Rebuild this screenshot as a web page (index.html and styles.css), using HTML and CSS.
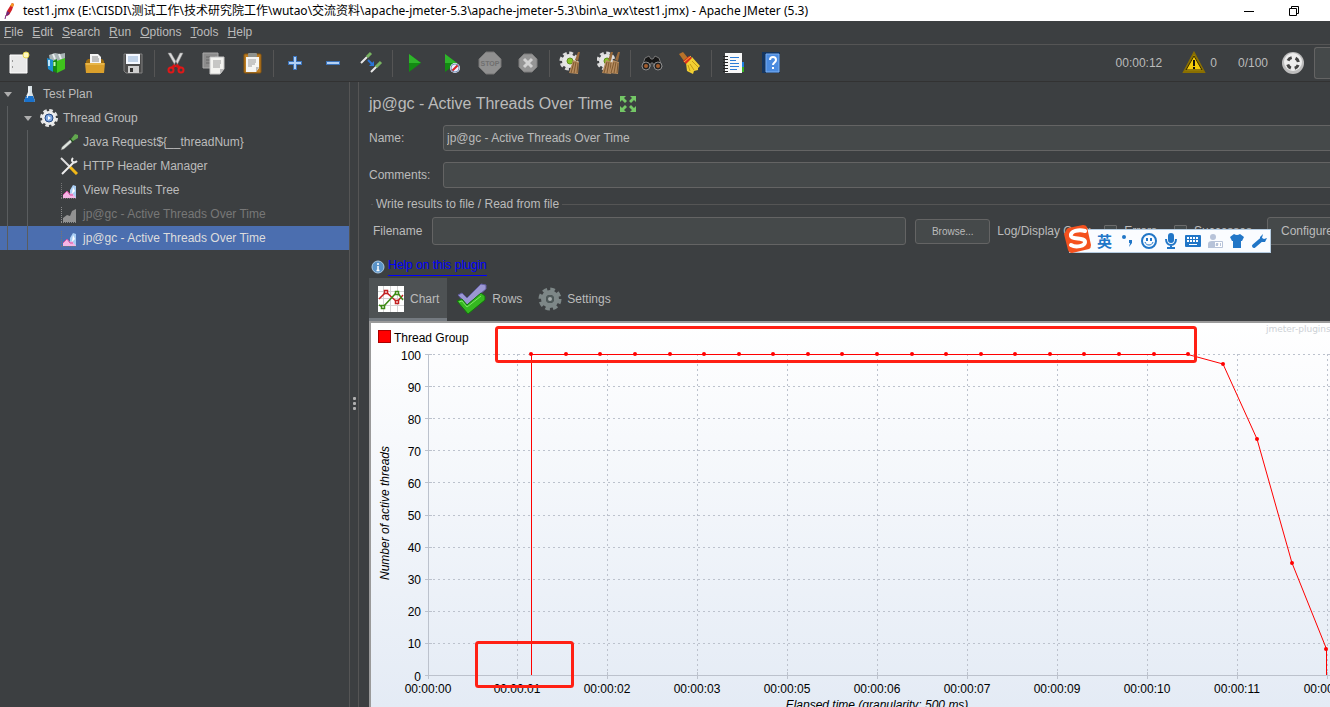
FILE: index.html
```
<!DOCTYPE html>
<html lang="en">
<head>
    <meta charset="UTF-8">
    <meta name="viewport" content="width=device-width, initial-scale=1.0">
    <title>test1.jmx - Apache JMeter (5.3)</title>
    <link rel="stylesheet" href="styles.css">
</head>
<body>
    <header class="titlebar">
        <svg class="feather" width="16" height="18" viewBox="0 0 16 18"><path d="M12 1l2 1-2 6-3 5-3 1 1-5z" fill="#d22128"/><path d="M12 1l2 1-1 3-3-1z" fill="#f69923"/><path d="M7 9l3 2-3 3-1-1z" fill="#6d2a7f"/><path d="M6 13l-1 4" stroke="#7c297d"/></svg>
        <span class="window-title">test1.jmx (E:\CISDI\测试工作\技术研究院工作\wutao\交流资料\apache-jmeter-5.3\apache-jmeter-5.3\bin\a_wx\test1.jmx) - Apache JMeter (5.3)</span>
        <button class="window-btn" aria-label="Minimize"><svg width="12" height="12"><path d="M1 6.500h10" stroke="#000"/></svg></button>
        <button class="window-btn" aria-label="Restore"><svg width="12" height="12" fill="none" stroke="#000"><path d="M1.500 3.500h7v7h-7zM3.500 3.500v-2h7v7h-2"/></svg></button>
    </header>

    <nav class="menubar">
        <button><u>F</u>ile</button>
        <button><u>E</u>dit</button>
        <button><u>S</u>earch</button>
        <button><u>R</u>un</button>
        <button><u>O</u>ptions</button>
        <button><u>T</u>ools</button>
        <button><u>H</u>elp</button>
    </nav>

    <div class="toolbar">
        <button aria-label="New"><svg width="24" height="24"><path d="M3 4h17v18H3z" fill="#e9e9e9" stroke="#fff"/><path d="M5.500 9v2M5.500 15v2" stroke="#999"/><circle cx="19" cy="4" r="3" fill="#fff8c0" stroke="#e8d850"/></svg></button>
        <button aria-label="Templates"><svg width="24" height="24"><path d="M4 4l6-2 5 1 5-1v8H5z" fill="#a9b4b6"/><path d="M8 3l2 5M14 3l2 5" stroke="#e8eeee" stroke-width="2"/><path d="M2 7l6 2v12l-5-3z" fill="#1d8fd1"/><path d="M4 9v6" stroke="#bfe8ff" stroke-width="2"/><path d="M8 10l4-2v14l-4-2z" fill="#168a12"/><path d="M12 10l8-3v11l-8 4z" fill="#3fc41c"/><path d="M9.500 11v4" stroke="#c6ffb4" stroke-width="2"/></svg></button>
        <button aria-label="Open"><svg width="24" height="24"><path d="M3 10l2-2h14l2 2v12H3z" fill="#9c6b10"/><path d="M7 3h8l3 3v9H7z" fill="#f5f5f5"/><path d="M9 6h6M9 8h7M9 10h7" stroke="#888"/><path d="M2 12h20l-1 10H3z" fill="#dba02b"/><path d="M3 13h18" stroke="#f4cb67"/></svg></button>
        <button aria-label="Save"><svg width="24" height="24"><path d="M3 3h18v19H5l-2-2z" fill="#4c4c4c" stroke="#808080"/><path d="M5 3h14v10H5z" fill="#f4f8ff"/><path d="M7 6h10M7 8h10M7 10h10" stroke="#8cacd0"/><path d="M7 15h11v7H7z" fill="#cfcfcf"/><path d="M9 17h3v4H9z" fill="#333"/></svg></button>
        <span class="separator"></span>
        <button aria-label="Cut"><svg width="24" height="24"><path d="M4 2l3 0 7 12-2 2zM19 2l-3 0-6 12 2 2z" fill="#dadada" stroke="#888" stroke-width=".5"/><path d="M11 14l-3 3M12 14l4 3" stroke="#d41414" stroke-width="3"/><circle cx="7" cy="19" r="2.500" fill="none" stroke="#e01818" stroke-width="2"/><circle cx="17" cy="19" r="2.500" fill="none" stroke="#e01818" stroke-width="2"/></svg></button>
        <button aria-label="Copy"><svg width="24" height="24"><path d="M1 2h15v15H1z" fill="#8c8c8c" stroke="#aaa"/><path d="M4 6h9M4 9h7M4 12h5" stroke="#666"/><path d="M8 6h14v12l-4 5H8z" fill="#f3f3f0" stroke="#c5c5c5"/><path d="M11 10h8M11 12h8M11 14h7M11 16h7" stroke="#999"/><path d="M18 23v-5h4z" fill="#bbb"/></svg></button>
        <button aria-label="Paste"><svg width="24" height="24"><rect x="4" y="3" width="17" height="19" rx="1" fill="#bb7c22" stroke="#89560f"/><path d="M6 6h13v11l-3 4H6z" fill="#f5f5f3"/><rect x="8" y="2" width="9" height="4" rx="1" fill="#8e918c"/><path d="M8 9h8M8 11h8M8 13h7M8 15h4" stroke="#999"/><path d="M16 21v-5h3z" fill="#bbb"/></svg></button>
        <span class="separator"></span>
        <button aria-label="Expand all"><svg width="24" height="24"><path d="M12 5v14M5 12h14" stroke="#3b73ba" stroke-width="4"/><path d="M12 6v12M6 12h12" stroke="#b3d1f5" stroke-width="2"/></svg></button>
        <button aria-label="Collapse all"><svg width="24" height="24"><path d="M5 12h14" stroke="#3b73ba" stroke-width="4"/><path d="M6 12h12" stroke="#b3d1f5" stroke-width="2"/></svg></button>
        <button aria-label="Toggle"><svg width="24" height="24"><path d="M2 12l6-6M12 21l6-6" stroke="#e8e8e8" stroke-width="2"/><path d="M8 6l4-4M17 16l5-5" stroke="#79b462" stroke-width="3"/><path d="M9 9l4 4" stroke="#2a75d8" stroke-width="2"/><path d="M15 10v5h-5z" fill="#2a75d8"/></svg></button>
        <span class="separator"></span>
        <button aria-label="Start"><svg width="24" height="24"><path d="M7 3l12 9-12 9z" fill="#138a13"/><path d="M7 3l12 9H7z" fill="#2fb52b"/></svg></button>
        <button aria-label="Start no pauses"><svg width="24" height="24"><path d="M5 3l12 9-12 9z" fill="#138a13"/><path d="M5 3l12 9H5z" fill="#2fb52b"/><circle cx="15" cy="17" r="5" fill="#eef"/><path d="M12 20l6-6" stroke="#d62020" stroke-width="2"/><circle cx="15" cy="17" r="4" fill="none" stroke="#7595ba"/></svg></button>
        <button aria-label="Stop"><svg width="24" height="24"><path d="M8 1h8l7 7v8l-7 7H8l-7-7V8z" fill="#909090" stroke="#777"/><text x="12" y="15" class="stop-text">STOP</text></svg></button>
        <button aria-label="Shutdown"><svg width="24" height="24"><path d="M8 3h8l5 5v8l-5 5H8l-5-5V8z" fill="#959595" stroke="#7d7d7d"/><path d="M8 8l8 8M16 8l-8 8" stroke="#d2d2d2" stroke-width="3"/></svg></button>
        <span class="separator"></span>
        <button aria-label="Clear"><svg width="24" height="24"><use href="#gear" x="0" y="0"/><use href="#broom" x="0" y="0"/></svg></button>
        <button aria-label="Clear all"><svg width="24" height="24"><use href="#gear" x="-1" y="0"/><use href="#broom" x="-5" y="0"/><use href="#broom" x="2" y="0"/></svg></button>
        <span class="separator"></span>
        <button aria-label="Search"><svg width="24" height="24"><path d="M5 7l4-2 2 3h2l2-3 4 2 3 9h-8l-1-4h-2l-1 4H2z" fill="#171717" stroke="#777"/><circle cx="6" cy="15" r="4" fill="#222" stroke="#8d8d8d"/><circle cx="18" cy="15" r="4" fill="#222" stroke="#8d8d8d"/><circle cx="6" cy="15" r="2" fill="#a35d2d"/><circle cx="18" cy="15" r="2" fill="#a35d2d"/></svg></button>
        <button aria-label="Reset search"><svg width="24" height="24"><path d="M1 3l4-2 5 6-4 3z" fill="#b8722a"/><path d="M8 12l6-6 8 9-2 2v2l-4 1-1 3-6-3z" fill="#f1cf32"/><path d="M5 10l6-5 3 2-6 6z" fill="#db2e1c"/><path d="M6 11l7-6" stroke="#f2b632"/><path d="M12 13l4 6M14 10l6 6M10 14l2 6" stroke="#c39a14"/></svg></button>
        <span class="separator"></span>
        <button aria-label="Functions"><svg width="24" height="24"><path d="M19 11h4v5h-4z" fill="#1c7ee0"/><path d="M19 16h4v5h-4z" fill="#35ad24"/><path d="M4 2h17v20H4z" fill="#f8f8f8"/><path d="M2 5.500h5M2 8.500h5M2 11.500h5M2 14.500h5M2 17.500h5M2 20.500h5" stroke="#222"/><path d="M9 6.500h9M9 9.500h6M9 12.500h9M9 15.500h9M9 18.500h7" stroke="#2c7cd6"/></svg></button>
        <button aria-label="Help"><svg width="24" height="24"><path d="M3 1h18v21H3z" fill="#15355e"/><path d="M7 3h13v18H7z" fill="#4a8be0" stroke="#7db0f2"/><path d="M11 9c0-4 6-4 6 0 0 2.500-3 2.500-3 5M14 16v2" fill="none" stroke="#fff" stroke-width="2"/></svg></button>

        <div class="status">
            <span>00:00:12</span>
            <svg class="warn" width="24" height="24"><path d="M12 2l10 19H2z" fill="#f4ca0a" stroke="#8a6f00" stroke-width="2"/><path d="M12 5l8 14H4z" fill="none" stroke="#332900"/><path d="M12 9v6M12 16v2" stroke="#111" stroke-width="2"/></svg>
            <span class="errors">0</span>
            <span>0/100</span>
            <svg class="remote" width="24" height="24"><circle cx="12" cy="12" r="11" fill="#bdbdbd"/><circle cx="12" cy="11" r="9" fill="#ededed"/><circle cx="12" cy="12" r="5.500" fill="none" stroke="#444" stroke-width="3" stroke-dasharray="4.640 4" stroke-dashoffset="-2"/></svg>
            <span class="status-box"></span>
        </div>
    </div>

    <main class="workspace">
        <ul class="tree">
            <li><span class="toggle"></span><svg width="18" height="18"><path d="M8 1h4v6l3 9-1 1H5l-1-1 4-9z" fill="#d9e2e6"/><path d="M6 11h7l2 5-1 1H5l-1-1z" fill="#1a72cc"/><path d="M9 2v6l-2 5" fill="none" stroke="#fff"/></svg>Test Plan</li>
            <li><span class="guide"></span><span class="toggle"></span><svg width="18" height="18"><circle cx="9" cy="9" r="7.500" fill="none" stroke="#e4e4e4" stroke-width="3" stroke-dasharray="3.500 2.390"/><circle cx="9" cy="9" r="7" fill="#ececec"/><circle cx="9" cy="9" r="4" fill="#7ba3dc" stroke="#234781"/><path d="M8 7l3 2-3 2z" fill="#fff"/></svg>Thread Group</li>
            <li><span class="guide"></span><span class="guide"></span><span class="indent"></span><svg width="18" height="18"><path d="M1 17l1-3 9-8 2 2-9 8z" fill="#dfe5df" stroke="#777" stroke-width=".5"/><path d="M10 5l3 4" stroke="#234a20" stroke-width="2"/><path d="M11 6l4-5 3 1v3l-5 3z" fill="#62a84f"/></svg>Java Request${__threadNum}</li>
            <li><span class="guide"></span><span class="guide"></span><span class="indent"></span><svg width="18" height="18"><path d="M1 1l9 9" stroke="#ddd" stroke-width="2"/><path d="M10 10l7 7" stroke="#f1b817" stroke-width="3"/><path d="M2 17L14 5" stroke="#eee" stroke-width="2"/><path d="M13 1c-3 3 1 6 4 3" fill="none" stroke="#e8e8e8" stroke-width="2"/></svg>HTTP Header Manager</li>
            <li><span class="guide"></span><span class="guide"></span><span class="indent"></span><svg width="18" height="18"><use href="#graph"/></svg>View Results Tree</li>
            <li class="disabled"><span class="guide"></span><span class="guide"></span><span class="indent"></span><svg width="18" height="18"><path d="M1.500 2v15M1 17.500h16" stroke="#8a8a8a" stroke-dasharray="1 1"/><path d="M3 17v-4l4-3 3 1 2-5 4-2v13z" fill="#929292"/></svg>jp@gc - Active Threads Over Time</li>
            <li class="selected"><span class="guide"></span><span class="guide"></span><span class="indent"></span><svg width="18" height="18"><use href="#graph"/></svg>jp@gc - Active Threads Over Time</li>
        </ul>

        <div class="splitter"><i></i><i></i><i></i></div>

        <section class="content">
            <div class="form">
                <h1>jp@gc - Active Threads Over Time
                    <svg width="18" height="18" fill="#74c766"><path d="M1 1h6L5 3l3 3-2 2-3-3-2 2zM17 1h-6l2 2-3 3 2 2 3-3 2 2zM1 17h6l-2-2 3-3-2-2-3 3-2-2zM17 17h-6l2-2-3-3 2-2 3 3 2-2z"/></svg>
                </h1>
                <div class="field">
                    <label for="name">Name:</label>
                    <input type="text" id="name" value="jp@gc - Active Threads Over Time">
                </div>
                <div class="field">
                    <label for="comments">Comments:</label>
                    <input type="text" id="comments">
                </div>
                <fieldset>
                    <legend>Write results to file / Read from file</legend>
                    <div class="file-row">
                        <label for="filename">Filename</label>
                        <input type="text" id="filename">
                        <button class="btn browse">Browse...</button>
                        <span class="log-label">Log/Display Only:</span>
                        <label class="check"><input type="checkbox">Errors</label>
                        <label class="check"><input type="checkbox">Successes</label>
                        <button class="btn configure">Configure</button>
                    </div>
                </fieldset>
            </div>

            <div class="help-row">
                <svg width="14" height="14"><circle cx="7" cy="7" r="6" fill="#5a93c8" stroke="#a9c9e6"/><path d="M7 3v2M7 6v5M5.500 10.500h3" stroke="#fff" stroke-width="1.500"/></svg>
                <a href="#help">Help on this plugin</a>
            </div>

            <div class="tabs">
                <button class="active"><svg width="28" height="28"><path d="M1 1h26v26H1z" fill="#fff"/><path d="M1 6.500h26M1 13.500h26M1 20.500h26M6.500 1v26M13.500 1v26M20.500 1v26" stroke="#d4d4d4"/><g fill="none" stroke-width="1.500"><path d="M2 14l7-7 11 10 6-7" stroke="#c22222"/><path d="M2 20l4 2L20 7l6 8" stroke="#3e8a16"/><path d="M7.500 5.500h3v3h-3zM18.500 15.500h3v3h-3z" fill="#fff" stroke="#c22222"/><path d="M4.500 20.500h3v3h-3zM18.500 6.500h3v3h-3z" fill="#fff" stroke="#3e8a16"/></g></svg>Chart</button>
                <button><svg width="32" height="32"><path d="M3 12l4-2 5 5L26 1l5 1v4L12 22z" fill="#9b97d3" stroke="#605c9f"/><path d="M2 18l5-2 5 6L26 10l4 3v4L13 31z" fill="#35b820" stroke="#12760c"/><path d="M4 19l3-1 5 6 14-11" fill="none" stroke="#7ee367"/></svg>Rows</button>
                <button><svg width="24" height="24"><circle cx="12" cy="12" r="9.500" fill="none" stroke="#7d8787" stroke-width="4" stroke-dasharray="4.460 3"/><circle cx="12" cy="12" r="6.500" fill="none" stroke="#7d8787" stroke-width="5"/><circle cx="12" cy="12" r="3" fill="#a5acac" stroke="#4e5959" stroke-width="2"/></svg>Settings</button>
            </div>

            <div class="chart">
                <svg class="plot">
                    <rect x="7.500" y="7.500" width="12" height="12" fill="#f00" stroke="#a00"/>
                    <text x="23" y="19">Thread Group</text>
                    <text x="895" y="9" class="watermark">jmeter-plugins.org</text>

                    <path class="grid" d="M57 31.500h960M57 63.500h960M57 95.500h960M57 127.500h960M57 159.500h960M57 192.500h960M57 224.500h960M57 256.500h960M57 288.500h960M57 320.500h960"/>
                    <path class="grid" d="M146.500 31v321M236.500 31v321M326.500 31v321M416.500 31v321M506.500 31v321M596.500 31v321M686.500 31v321M776.500 31v321M866.500 31v321M956.500 31v321"/>
                    <path class="axis" d="M57.500 31v325M54 352.500h960M54 31.500h7M54 63.500h7M54 95.500h7M54 127.500h7M54 159.500h7M54 192.500h7M54 224.500h7M54 256.500h7M54 288.500h7M54 320.500h7"/>
                    <path class="axis" d="M146.500 349v7M236.500 349v7M326.500 349v7M416.500 349v7M506.500 349v7M596.500 349v7M686.500 349v7M776.500 349v7M866.500 349v7M956.500 349v7"/>

                    <g class="y-labels">
                        <text x="50" y="37">100</text>
                        <text x="50" y="69">90</text>
                        <text x="50" y="101">80</text>
                        <text x="50" y="133">70</text>
                        <text x="50" y="165">60</text>
                        <text x="50" y="197">50</text>
                        <text x="50" y="229">40</text>
                        <text x="50" y="261">30</text>
                        <text x="50" y="293">20</text>
                        <text x="50" y="325">10</text>
                        <text x="50" y="358">0</text>
                    </g>
                    <g class="x-labels">
                        <text x="57" y="370">00:00:00</text>
                        <text x="146" y="370">00:00:01</text>
                        <text x="236" y="370">00:00:02</text>
                        <text x="326" y="370">00:00:03</text>
                        <text x="416" y="370">00:00:05</text>
                        <text x="506" y="370">00:00:06</text>
                        <text x="596" y="370">00:00:07</text>
                        <text x="686" y="370">00:00:09</text>
                        <text x="776" y="370">00:00:10</text>
                        <text x="866" y="370">00:00:11</text>
                        <text x="956" y="370">00:00:12</text>
                        <text x="506" y="386" class="axis-title">Elapsed time (granularity: 500 ms)</text>
                        <text transform="translate(18 190) rotate(-90)" class="axis-title">Number of active threads</text>
                    </g>

                    <polyline class="series" points="160.500,352 160.500,31.500 817,31.500 852,41 886,116 921,240 955.500,326 955.500,352"/>
                    <path class="dots" d="M160 31h0M195 31h0M229 31h0M264 31h0M299 31h0M333 31h0M368 31h0M402 31h0M437 31h0M471 31h0M506 31h0M541 31h0M575 31h0M610 31h0M644 31h0M679 31h0M713 31h0M748 31h0M783 31h0M817 31h0M852 41h0M886 116h0M921 240h0M955 326h0"/>

                    <rect class="mark" x="125.500" y="4.500" width="699" height="34" rx="2"/>
                    <rect class="mark" x="105.500" y="319.500" width="96" height="44" rx="2"/>
                </svg>
            </div>
        </section>
    </main>

    <!-- input method bar floating over the window -->
    <div class="ime">
        <svg class="ime-logo" width="30" height="28"><path d="M3 6q0-2 2-3L20 0q3 0 4 2l4 18q0 3-2 4L9 28q-3 0-4-3L1 9z" fill="#f4511e"/><path d="M22 6C16 4 7 6 8 11c1 4 14 1 14 6 0 4-9 6-14 3" fill="none" stroke="#fff" stroke-width="4" stroke-linecap="round"/></svg>
        <span>英</span>
        <svg width="16" height="16"><circle cx="5" cy="4" r="2"/><path d="M10 7h3v3l-3 4 1-4h-1z"/></svg>
        <svg width="16" height="16"><circle cx="8" cy="8" r="7" fill="none" stroke="#2176c7" stroke-width="2"/><path d="M5 5h2v3H5zM9 5h2v3H9z"/><path d="M4 9c1 4 7 4 8 0" fill="none" stroke="#2176c7"/></svg>
        <svg width="16" height="16"><rect x="5" y="0" width="6" height="10" rx="3"/><path d="M3 6c0 8 10 8 10 0M8 12v3M4 15h8" fill="none" stroke="#2176c7" stroke-width="2"/></svg>
        <svg width="16" height="16"><rect x="0" y="2" width="16" height="12" rx="1"/><path d="M2 5h12M2 8h12" stroke="#fff" stroke-width="2" stroke-dasharray="2 1"/><path d="M4 11.500h8" stroke="#fff"/></svg>
        <svg class="muted" width="16" height="16"><circle cx="6" cy="4" r="3"/><path d="M1 15V11q0-3 4-3h3v7z"/><path d="M7.500 8.500h8v6h-8z" fill="#fff" stroke="#b7c3d9"/><path d="M9 10.500h2v1H9v1h2M13.500 10v3" fill="none" stroke="#b7c3d9"/></svg>
        <svg width="16" height="16"><path d="M5 1q3 2 6 0l4 3-2 4h-1v7H4V8H3L1 4z"/></svg>
        <svg width="16" height="16"><path d="M3 13l7-6" stroke="#2176c7" stroke-width="4" stroke-linecap="round"/><path d="M12 1L9 4v3l2 2h3l2-4-3 1-2-1z"/></svg>
    </div>

    <!-- shared icon shapes -->
    <svg class="defs" width="0" height="0">
        <defs>
            <g id="gear"><circle cx="10" cy="10" r="8" fill="none" stroke="#dcdcdc" stroke-width="3" stroke-dasharray="3.780 2.500"/><circle cx="10" cy="10" r="7" fill="#e6e6e6"/><circle cx="11" cy="10" r="3" fill="#86c428" stroke="#5f8c1b"/></g>
            <g id="broom"><path d="M19 1l2 0-2 9-3-1z" fill="#9a6b3c"/><path d="M14 9l6 2-1 12-9-1z" fill="#b58b5e"/><path d="M15 11l-3 11M17 11l-2 11M19 12l-1 10" stroke="#80592f"/></g>
            <g id="graph"><path d="M1.500 2v15M1 17.500h16" stroke="#757575" stroke-dasharray="1 1"/><path d="M10 17V9l3-5 3 1v12z" fill="#a9cdf3"/><path d="M13 6l2 4-3 3" fill="#fff"/><path d="M3 17v-3l4-4 3 3 2-1 4 5z" fill="#f6b6e4"/><path d="M3 14l4-4 3 4h3" fill="none" stroke="#d64fa4"/></g>
        </defs>
    </svg>
</body>
</html>
```
FILE: styles.css
```
* {
    box-sizing: border-box;
}
body {
    margin: 0;
    height: 100vh;
    display: flex;
    flex-direction: column;
    overflow: hidden;
    position: relative;
    background-color: #3c3f41;
    color: #bbbbbb;
    font-family: "Liberation Sans", Arial, "Noto Sans CJK SC", sans-serif;
    font-size: 12px;
}
button {
    padding: 0;
    border: none;
    background: none;
    color: inherit;
    font: inherit;
}
svg {
    flex: none;
}

/* Window title */
.titlebar {
    display: flex;
    align-items: center;
    height: 21px;
    padding-right: 28px;
    background-color: #fff;
    color: #000;
    font-family: "Noto Sans", "Noto Sans CJK SC", sans-serif;
    line-height: 20px;
    white-space: nowrap;
}
.feather {
    margin-right: 7px;
}
.window-title {
    flex: 1;
}
.window-btn {
    width: 14px;
    height: 16px;
    margin-left: 31px;
}
.window-btn svg {
    display: block;
}

/* Menu and toolbar */
.menubar {
    display: flex;
    gap: 9px;
    height: 24px;
    padding: 0 4px 2px;
    border-bottom: 1px solid #555555;
}
.toolbar {
    display: flex;
    align-items: center;
    height: 37px;
    border-bottom: 1px solid #323232;
}
.toolbar button {
    width: 38px;
    height: 24px;
}
.toolbar button svg {
    display: block;
    margin: 0 auto;
}
.separator {
    width: 1px;
    height: 27px;
    margin: 0 2px;
    background-color: #555555;
}
.stop-text {
    font-size: 7px;
    font-weight: bold;
    text-anchor: middle;
    fill: #6f6f6f;
}
.status {
    display: flex;
    align-items: center;
    margin-left: auto;
}
.warn {
    margin-left: 20px;
}
.errors {
    margin: 0 21px 0 4px;
}
.remote {
    margin: 0 9px 0 13px;
}
.status-box {
    width: 16px;
    height: 32px;
    border: 1px solid #646464;
    border-right: none;
    border-radius: 3px 0 0 3px;
    background-color: #45494a;
}

/* Test plan tree */
.workspace {
    display: flex;
    flex: 1;
    min-height: 0;
}
.tree {
    flex: none;
    width: 350px;
    margin: 0;
    padding: 0;
    list-style: none;
    border-right: 1px solid #555555;
}
.tree li {
    display: flex;
    align-items: center;
    height: 24px;
    white-space: nowrap;
}
.tree li svg {
    margin-right: 5px;
}
.tree .disabled {
    color: #777777;
}
.tree .selected {
    background-color: #4b6eaf;
    color: #dddddd;
}
.guide,
.toggle,
.indent {
    width: 20px;
}
.guide {
    align-self: stretch;
    background: linear-gradient(#5a5d5f, #5a5d5f) 7px 0 / 1px 100% no-repeat;
}
.toggle::before {
    content: "";
    display: block;
    width: 0;
    margin-left: 4px;
    border: 4px solid transparent;
    border-top: 5px solid #adadad;
    border-bottom: none;
}
.splitter {
    display: flex;
    flex-direction: column;
    justify-content: center;
    align-items: center;
    gap: 2px;
    width: 9px;
    padding-bottom: 2px;
    padding-top: 20px;
    border-right: 1px solid #555555;
}
.splitter i {
    width: 3px;
    height: 3px;
    border-radius: 1px;
    background-color: #b0b0b0;
}

/* Element panel */
.content {
    flex: 1;
    min-width: 0;
    display: flex;
    flex-direction: column;
    padding: 10px 0 0 10px;
    overflow: hidden;
}
.form {
    margin-right: -40px;
}
h1 {
    display: flex;
    align-items: center;
    gap: 6px;
    height: 24px;
    margin: 0 0 9px;
    font-size: 16px;
    font-weight: normal;
}
.field {
    display: flex;
    align-items: center;
    margin-bottom: 11px;
}
.field label {
    width: 74px;
}
input[type="text"] {
    flex: 1;
    min-width: 0;
    height: 26px;
    padding: 0 3px;
    border: 1px solid #646464;
    border-radius: 3px;
    background-color: #45494a;
    color: #bbbbbb;
    font: inherit;
}
fieldset {
    min-width: 0;
    margin: -2px 2px 0;
    padding: 6px 0 0 2px;
    border: none;
    border-top: 1px solid #555555;
}
legend {
    padding: 0 3px;
}
.file-row {
    display: flex;
    align-items: center;
    white-space: nowrap;
}
.file-row input[type="text"] {
    height: 28px;
    margin: 0 9px 0 10px;
}
.btn {
    flex: none;
    border: 1px solid #646464;
    border-radius: 3px;
    background-color: #45494a;
}
.browse {
    width: 75px;
    height: 25px;
    margin-right: 7px;
    font-size: 10px;
}
.configure {
    width: 101px;
    height: 28px;
    padding-left: 13px;
    text-align: left;
}
.log-label {
    width: 107px;
}
.check {
    display: flex;
    align-items: center;
    gap: 7px;
    margin-right: 17px;
}
.check + .check {
    margin-right: 15px;
}
.check input {
    appearance: none;
    width: 13px;
    height: 13px;
    margin: 0;
    border: 1px solid #6b6b6b;
    border-radius: 1px;
    background-color: #43494a;
}
.help-row {
    display: flex;
    align-items: center;
    gap: 3px;
    height: 20px;
    margin: 12px 0 1px 2px;
}
.help-row a {
    height: 18px;
    border-bottom: 1px solid #0000ff;
    color: #0000ff;
    text-decoration: none;
}
.tabs {
    display: flex;
    height: 43px;
}
.tabs button {
    display: flex;
    align-items: center;
    gap: 5px;
    padding: 2px 8px 0;
    border-bottom: 3px solid transparent;
}
.tabs .active {
    border-color: #747a80;
    background-color: #4e5254;
}

/* Threads chart */
.chart {
    flex: 1;
    min-height: 0;
    border: 2px solid #9a9a9a;
    border-width: 2px 0 0 2px;
    background: linear-gradient(#ffffff, #e4ebf5);
}
.plot {
    display: block;
    width: 100%;
    height: 100%;
    overflow: hidden;
}
.plot text {
    fill: #000;
}
.plot .watermark {
    font-family: "DejaVu Sans", sans-serif;
    font-size: 9px;
    fill: #cdd1d6;
}
.plot .axis-title {
    font-style: italic;
}
.grid {
    fill: none;
    stroke: #bcc2cd;
    stroke-dasharray: 2 3;
}
.axis {
    fill: none;
    stroke: #bcc2cd;
}
.y-labels {
    text-anchor: end;
}
.x-labels {
    text-anchor: middle;
}
.series {
    fill: none;
    stroke: #ff0000;
}
.dots {
    stroke: #ff0000;
    stroke-width: 4;
    stroke-linecap: round;
}
.mark {
    fill: none;
    stroke: #ff2014;
    stroke-width: 3;
}

/* Input method bar */
.ime {
    position: absolute;
    top: 229px;
    right: 59px;
    display: flex;
    align-items: center;
    gap: 6px;
    height: 24px;
    padding: 0 3px 0 21px;
    border: 1px solid #b4cbe0;
    background-color: #fafcff;
    color: #2176c7;
    fill: #2176c7;
}
.ime span {
    width: 16px;
    font-family: "Noto Sans CJK SC", sans-serif;
    font-size: 15px;
    font-weight: bold;
    line-height: 22px;
}
.ime .muted {
    fill: #b7c3d9;
}
.ime-logo {
    margin: -4px -2px 0 -28px;
}
.defs {
    position: absolute;
}
```
